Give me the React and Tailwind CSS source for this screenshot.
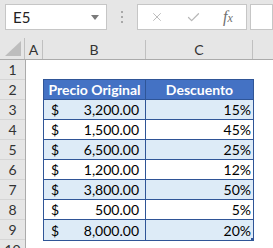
import { Check, X } from 'lucide-react';

const rows = [
    { price: '3,200.00', disc: '15%' },
    { price: '1,500.00', disc: '45%' },
    { price: '6,500.00', disc: '25%' },
    { price: '1,200.00', disc: '12%' },
    { price: '3,800.00', disc: '50%' },
    { price: '500.00', disc: '5%' },
    { price: '8,000.00', disc: '20%' },
];

function RowHeader({ n }) {
    return (
        <div className="h-[20px] flex items-center justify-center border-b border-[#d5d5d5] text-[14px] text-[#333]">
            {n}
        </div>
    );
}

export default function App() {
    return (
        <div className="w-[273px] h-[248px] overflow-hidden bg-white font-['Lato',sans-serif] text-black">
            {/* formula bar */}
            <div className="h-[38px] bg-[#e6e6e6] flex items-start pt-[4px]">
                <div className="ml-[5px] w-[102px] h-[26px] bg-white border border-[#c6c6c6] flex items-center pl-[7px] pr-[7px]">
                    <span className="text-[15px] text-[#222] flex-1">E5</span>
                    <svg width="8" height="5" viewBox="0 0 8 5">
                        <path d="M0 0 L8 0 L4 5 Z" fill="#7a7a7a" />
                    </svg>
                </div>
                <div className="w-[30px] h-[26px] flex flex-col items-center justify-center gap-[3px]">
                    <span className="w-[2px] h-[2px] bg-[#a8a8a8]" />
                    <span className="w-[2px] h-[2px] bg-[#a8a8a8]" />
                    <span className="w-[2px] h-[2px] bg-[#a8a8a8]" />
                </div>
                <div className="w-[110px] h-[26px] bg-white border border-[#c6c6c6] flex items-center">
                    <div className="w-[38px] flex justify-center text-[#b8b8b8]"><X size={14} strokeWidth={1.6} /></div>
                    <div className="w-[34px] flex justify-center text-[#b8b8b8]"><Check size={15} strokeWidth={2} /></div>
                    <div className="w-[36px] flex items-baseline justify-center text-[#707070] italic font-['Liberation_Serif',serif] leading-none">
                        <span className="text-[16px]">f</span>
                        <span className="text-[12px]">x</span>
                    </div>
                </div>
                <div className="ml-[3px] flex-1 h-[26px] bg-white border border-[#c6c6c6]" />
            </div>

            {/* column headers */}
            <div className="h-[22px] bg-[#e6e6e6] border-b border-[#ababab] flex text-[14px] text-[#333]">
                <div className="w-[25px] h-full border-r border-[#c0c0c0] flex items-end justify-end pr-[3px] pb-[3px]">
                    <svg width="16" height="15" viewBox="0 0 16 15">
                        <path d="M16 0 L16 15 L0 15 Z" fill="#bdbdbd" />
                    </svg>
                </div>
                <div className="w-[18px] mt-[2px] border-r border-[#c0c0c0] flex items-center justify-center">A</div>
                <div className="w-[103px] mt-[2px] border-r border-[#c0c0c0] flex items-center justify-center">B</div>
                <div className="w-[107px] mt-[2px] border-r border-[#c0c0c0] flex items-center justify-center">C</div>
                <div className="flex-1" />
            </div>

            {/* sheet */}
            <div className="flex">
                <div className="w-[26px] bg-[#e6e6e6] border-r border-[#ababab]">
                    {[1, 2, 3, 4, 5, 6, 7, 8, 9, 10].map(n => <RowHeader key={n} n={n} />)}
                </div>
                <div className="pl-[17px] pt-[19px]">
                    <div className="w-[211px] border border-[#2f5597] relative text-[14px]">
                        <div className="h-[20px] flex bg-[#4472c4] border-b border-[#2f5597] text-white font-bold">
                            <div className="w-[102px] border-r border-[#2f5597] flex items-center justify-center">Precio Original</div>
                            <div className="flex-1 flex items-center justify-center">Descuento</div>
                        </div>
                        {rows.map((r, i) => (
                            <div key={i} className={`h-[20px] flex ${i < rows.length - 1 ? 'border-b border-[#2f5597]' : ''} ${i % 2 === 0 ? 'bg-[#ddebf7]' : 'bg-white'}`}>
                                <div className="w-[102px] border-r border-[#2f5597] flex items-center pl-[7px] pr-[6px]">
                                    <span>$</span>
                                    <span className="ml-auto">{r.price}</span>
                                </div>
                                <div className="flex-1 flex items-center justify-end pr-[2px]">{r.disc}</div>
                            </div>
                        ))}
                        <span className="absolute right-[-1px] bottom-[-1px] w-[3px] h-[3px] bg-[#2f5597]" />
                    </div>
                </div>
            </div>
        </div>
    );
}
